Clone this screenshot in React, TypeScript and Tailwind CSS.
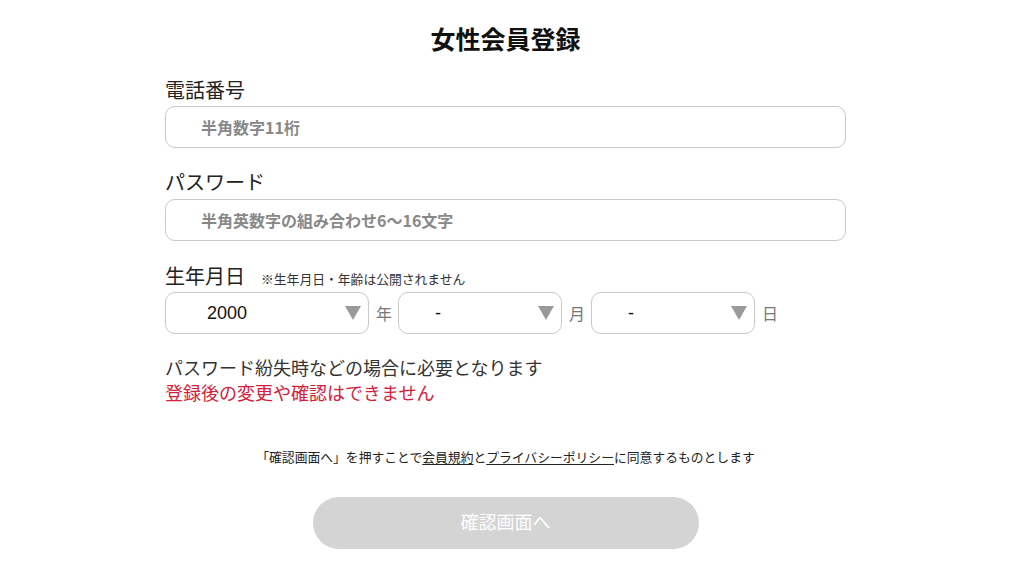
const JP = "font-['Noto_Sans_CJK_JP',sans-serif]";

function Caret() {
  return (
    <svg width="16" height="14" viewBox="0 0 16 14" className="shrink-0">
      <path d="M0 0H16L8 14Z" fill="#9a9a9a" />
    </svg>
  );
}

function DateSelect({
  value,
  unit,
  width,
  pad,
}: {
  value: string;
  unit: string;
  width: string;
  pad: string;
}) {
  return (
    <div className="flex items-center gap-[7px]">
      <div
        className={`flex h-[42px] ${width} items-center justify-between rounded-[10px] border border-[#c8c8c8] bg-white ${pad} pr-[7px]`}
      >
        <span className="font-['Liberation_Sans',sans-serif] text-[18px] text-[#111]">
          {value}
        </span>
        <Caret />
      </div>
      <span className="text-[16px] text-[#777]">{unit}</span>
    </div>
  );
}

export default function App() {
  return (
    <div className={`min-h-[571px] bg-white ${JP}`}>
      <div className="ml-[165px] flex w-[681px] flex-col pt-[22px]">
        <h1 className="text-center text-[25px] font-bold leading-[32px] text-[#111]">
          女性会員登録
        </h1>

        <label className="mt-[22px] text-[20px] leading-[28px] text-[#222]">
          電話番号
        </label>
        <div className="mt-[2px] flex h-[42px] items-center rounded-[10px] border border-[#c8c8c8] pl-[35px]">
          <span className="text-[16px] font-bold text-[#888]">半角数字11桁</span>
        </div>

        <label className="mt-[20px] text-[20px] leading-[28px] text-[#222]">
          パスワード
        </label>
        <div className="mt-[3px] flex h-[42px] items-center rounded-[10px] border border-[#c8c8c8] pl-[35px]">
          <span className="text-[16px] font-bold text-[#888]">
            半角英数字の組み合わせ6〜16文字
          </span>
        </div>

        <div className="mt-[21px] flex items-baseline gap-[16px]">
          <span className="text-[20px] leading-[28px] text-[#222]">生年月日</span>
          <span className="text-[12.8px] text-[#333]">※生年月日・年齢は公開されません</span>
        </div>
        <div className="mt-[2px] flex items-center gap-[6px]">
          <DateSelect value="2000" unit="年" width="w-[204px]" pad="pl-[41px]" />
          <DateSelect value="-" unit="月" width="w-[164px]" pad="pl-[36px]" />
          <DateSelect value="-" unit="日" width="w-[164px]" pad="pl-[36px]" />
        </div>

        <p className="mt-[20px] text-[18px] leading-[26px] text-[#333]">
          パスワード紛失時などの場合に必要となります
        </p>
        <p className="text-[18px] leading-[25px] text-[#d3213c]">
          登録後の変更や確認はできません
        </p>

        <p className="mt-[43px] text-center text-[12.8px] leading-[18px] text-[#222]">
          「確認画面へ」を押すことで
          <span className="underline underline-offset-2">会員規約</span>と
          <span className="underline underline-offset-2">プライバシーポリシー</span>
          に同意するものとします
        </p>

        <button
          type="button"
          className="mx-auto mt-[31px] flex h-[52px] w-[386px] items-center justify-center rounded-full bg-[#d4d4d4] font-['Liberation_Serif','Noto_Sans_CJK_JP',serif] text-[18px] text-white"
        >
          確認画面へ
        </button>
      </div>
    </div>
  );
}
